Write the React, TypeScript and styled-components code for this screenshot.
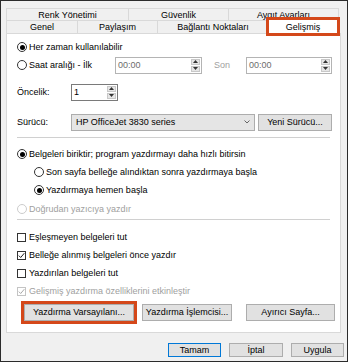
import React from 'react'
import styled, { createGlobalStyle } from 'styled-components'

const GlobalStyle = createGlobalStyle`
  body {
    margin: 0;
    background: #fff;
    font-family: "Liberation Sans", Arial, sans-serif;
  }
`

const Frame = styled.div`
  width: 348px;
  height: 362px;
  box-sizing: border-box;
  border: 1px solid #2b2b2b;
  background: #f0f0f0;
  display: flex;
  flex-direction: column;
  padding: 7px 0 0 5px;
  font-size: 9px;
  color: #000;
`

const TabRow = styled.div<{ $h: number }>`
  display: flex;
  height: ${p => p.$h}px;
`

const Tab = styled.div<{ $w: number }>`
  width: ${p => p.$w}px;
  box-sizing: border-box;
  border: 1px solid #d9d9d9;
  border-bottom: none;
  margin-right: -1px;
  display: flex;
  align-items: center;
  justify-content: center;
  background: #f0f0f0;
`

const ActiveTab = styled(Tab)`
  position: relative;
  z-index: 1;
  background: #fff;
  margin-top: -1px;
  height: 15px;
  outline: 3px solid #d4481a;
  outline-offset: -1px;
`

const Panel = styled.div`
  width: 335px;
  height: 300px;
  box-sizing: border-box;
  border: 1px solid #d9d9d9;
  background: #fff;
  padding: 4px 0 0 10px;
  display: flex;
  flex-direction: column;
`

const Row = styled.div<{ $mt?: number; $indent?: number }>`
  display: flex;
  align-items: center;
  height: 18px;
  margin-top: ${p => p.$mt ?? 0}px;
  padding-left: ${p => p.$indent ?? 0}px;
`

const Label = styled.span<{ $w?: number; $ml?: number; $disabled?: boolean }>`
  display: flex;
  align-items: center;
  width: ${p => (p.$w ? `${p.$w}px` : 'auto')};
  margin-left: ${p => p.$ml ?? 0}px;
  flex: none;
  color: ${p => (p.$disabled ? '#a0a0a0' : '#000')};
  white-space: nowrap;
`

const RadioCircle = styled.span<{ $checked?: boolean; $disabled?: boolean }>`
  width: 10px;
  height: 10px;
  box-sizing: border-box;
  border-radius: 50%;
  border: 1px solid ${p => (p.$disabled ? '#cccccc' : '#333')};
  display: flex;
  align-items: center;
  justify-content: center;
  margin-right: 2px;
  flex: none;

  &::after {
    content: '';
    width: 5px;
    height: 5px;
    border-radius: 50%;
    background: #000;
    display: ${p => (p.$checked ? 'block' : 'none')};
  }
`

const CheckBox = styled.span<{ $disabled?: boolean }>`
  width: 9px;
  height: 9px;
  box-sizing: border-box;
  border: 1px solid ${p => (p.$disabled ? '#c4c4c4' : '#333')};
  margin-right: 3px;
  flex: none;
  display: flex;
`

const Field = styled.div<{ $w: number; $disabled?: boolean }>`
  width: ${p => p.$w}px;
  height: 17px;
  box-sizing: border-box;
  border: 1px solid ${p => (p.$disabled ? '#b4b4b4' : '#7a7a7a')};
  background: #fff;
  display: flex;
  align-items: center;
  padding-left: 2px;
  color: ${p => (p.$disabled ? '#6d6d6d' : '#000')};
  flex: none;
`

const Spin = styled.div`
  margin-left: auto;
  margin-right: 1px;
  display: flex;
  flex-direction: column;
  gap: 1px;
  width: 9px;
  height: 13px;
`

const SpinButton = styled.div`
  flex: 1;
  box-sizing: border-box;
  background: #e6e6e6;
  border: 1px solid #c8c8c8;
  display: flex;
  align-items: center;
  justify-content: center;
`

const Select = styled.div`
  width: 184px;
  height: 17px;
  box-sizing: border-box;
  border: 1px solid #adadad;
  background: #e5e5e5;
  display: flex;
  align-items: center;
  justify-content: space-between;
  padding: 0 4px 0 4px;
  flex: none;
`

const Button = styled.button<{ $w: number; $ml?: number; $h?: number; $default?: boolean }>`
  width: ${p => p.$w}px;
  height: ${p => p.$h ?? 17}px;
  margin-left: ${p => p.$ml ?? 0}px;
  box-sizing: border-box;
  border: 1px solid ${p => (p.$default ? '#0078d7' : '#adadad')};
  background: #e1e1e1;
  font-family: inherit;
  font-size: 9px;
  color: #000;
  padding: 0;
  flex: none;
`

const HighlightButton = styled(Button)`
  outline: 3px solid #d4481a;
`

const Divider = styled.div<{ $mt: number }>`
  width: 313px;
  height: 1px;
  background: #d0d0d0;
  margin-top: ${p => p.$mt}px;
`

const Footer = styled.div`
  display: flex;
  justify-content: flex-end;
  gap: 8px;
  padding-right: 3px;
  margin-top: 10px;
`

const Arrow = ({ up }: { up?: boolean }) => (
  <svg width="5" height="3" viewBox="0 0 5 3">
    <path d={up ? 'M0 3 L2.5 0 L5 3 Z' : 'M0 0 L2.5 3 L5 0 Z'} fill="#333" />
  </svg>
)

const Spinner = () => (
  <Spin>
    <SpinButton><Arrow up /></SpinButton>
    <SpinButton><Arrow /></SpinButton>
  </Spin>
)

const Radio = ({ checked, disabled, children }: { checked?: boolean; disabled?: boolean; children: React.ReactNode }) => (
  <Label $disabled={disabled}>
    <RadioCircle $checked={checked} $disabled={disabled} />
    {children}
  </Label>
)

const Check = ({ checked, disabled, children }: { checked?: boolean; disabled?: boolean; children: React.ReactNode }) => (
  <Label $disabled={disabled}>
    <CheckBox $disabled={disabled}>
      {checked && (
        <svg width="7" height="7" viewBox="0 0 7 7">
          <path d="M0.8 3.6 L2.7 5.5 L6.3 1.2" fill="none" stroke={disabled ? '#a8a8a8' : '#222'} strokeWidth="1" />
        </svg>
      )}
    </CheckBox>
    {children}
  </Label>
)

export default function App() {
  return (
    <>
      <GlobalStyle />
      <Frame>
        <TabRow $h={12}>
          <Tab $w={123}>Renk Yönetimi</Tab>
          <Tab $w={101}>Güvenlik</Tab>
          <Tab $w={111}>Aygıt Ayarları</Tab>
        </TabRow>
        <TabRow $h={13}>
          <Tab $w={72}>Genel</Tab>
          <Tab $w={81}>Paylaşım</Tab>
          <Tab $w={112}>Bağlantı Noktaları</Tab>
          <ActiveTab $w={70}>Gelişmiş</ActiveTab>
        </TabRow>
        <Panel>
          <Row>
            <Radio checked>Her zaman kullanılabilir</Radio>
          </Row>
          <Row>
            <Label $w={98}>
              <RadioCircle />
              Saat aralığı - İlk
            </Label>
            <Field $w={87} $disabled>
              00:00
              <Spinner />
            </Field>
            <Label $w={32} $ml={12} $disabled>Son</Label>
            <Field $w={86} $disabled>
              00:00
              <Spinner />
            </Field>
          </Row>
          <Row $mt={9}>
            <Label $w={54}>Öncelik:</Label>
            <Field $w={47}>
              1
              <Spinner />
            </Field>
          </Row>
          <Row $mt={12}>
            <Label $w={54}>Sürücü:</Label>
            <Select>
              HP OfficeJet 3830 series
              <svg width="6" height="4" viewBox="0 0 6 4">
                <path d="M0.5 0.5 L3 3 L5.5 0.5" fill="none" stroke="#555" strokeWidth="0.9" />
              </svg>
            </Select>
            <Button $w={74} $ml={3}>Yeni Sürücü...</Button>
          </Row>
          <Divider $mt={6} />
          <Row $mt={7}>
            <Radio checked>Belgeleri biriktir; program yazdırmayı daha hızlı bitirsin</Radio>
          </Row>
          <Row $indent={17}>
            <Radio>Son sayfa belleğe alındıktan sonra yazdırmaya başla</Radio>
          </Row>
          <Row $indent={17}>
            <Radio checked>Yazdırmaya hemen başla</Radio>
          </Row>
          <Row $mt={1}>
            <Radio disabled>Doğrudan yazıcıya yazdır</Radio>
          </Row>
          <Divider $mt={1} />
          <Row $mt={8}>
            <Check>Eşleşmeyen belgeleri tut</Check>
          </Row>
          <Row>
            <Check checked>Belleğe alınmış belgeleri önce yazdır</Check>
          </Row>
          <Row>
            <Check>Yazdırılan belgeleri tut</Check>
          </Row>
          <Row>
            <Check checked disabled>Gelişmiş yazdırma özelliklerini etkinleştir</Check>
          </Row>
          <Row $mt={3} $indent={7}>
            <HighlightButton $w={110}>Yazdırma Varsayılanı...</HighlightButton>
            <Button $w={90} $ml={8}>Yazdırma İşlemcisi...</Button>
            <Button $w={89} $ml={14}>Ayırıcı Sayfa...</Button>
          </Row>
        </Panel>
        <Footer>
          <Button $w={53} $h={14} $default>Tamam</Button>
          <Button $w={54} $h={14}>İptal</Button>
          <Button $w={53} $h={14}>Uygula</Button>
        </Footer>
      </Frame>
    </>
  )
}
